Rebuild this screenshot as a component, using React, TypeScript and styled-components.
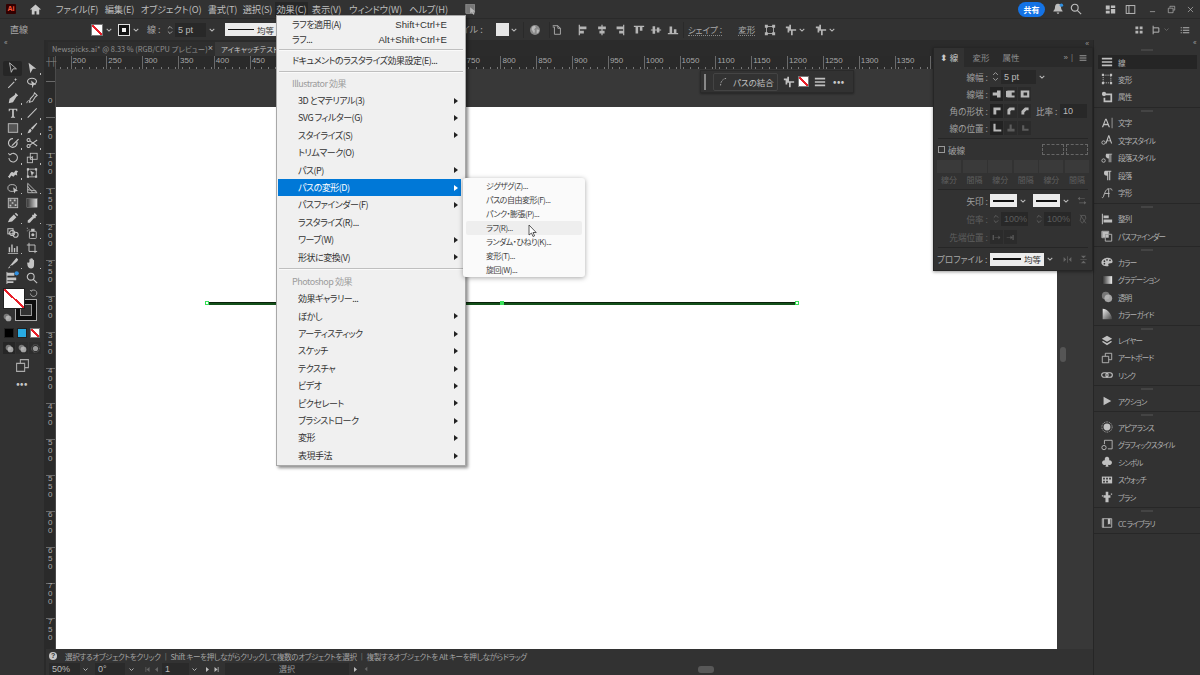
import React from "react";
import styled, { createGlobalStyle } from "styled-components";

const FONT = `"Noto Sans CJK JP", "Noto Sans", "Liberation Sans", sans-serif`;

const Global = createGlobalStyle`
  html, body { margin: 0; padding: 0; width: 1200px; height: 675px; overflow: hidden; background: #323232; }
  * { box-sizing: border-box; }
  body { font-family: ${FONT}; font-feature-settings: "palt"; }
`;

const Frame = styled.div`
  position: relative; width: 1200px; height: 675px; overflow: hidden; display: flex; flex-direction: column;
  background: #323232; color: #b8b8b8; font-size: 9px;
`;
const MenuBar = styled.div`display: flex; align-items: center; height: 18px; flex: none; background: #323232; position: relative;`;
const AppLogo = styled.div`
  width: 10px; height: 10px; margin-left: 6px; background: #330000; color: #ff5a3c; font: 700 7px/10px "Liberation Sans", sans-serif; text-align: center; border-radius: 1px; flex: none;
`;
const HomeBox = styled.div`width: 24px; margin-left: 7px; display: flex; justify-content: center; color: #c8c8c8; flex: none;`;
const MenuItems = styled.div`display: flex; margin-left: 5px; gap: 0;`;
const MenuLabel = styled.div<{ $w: number; $open?: boolean }>`
  width: ${(p) => p.$w}px; height: 15px; line-height: 15px; text-align: center; font-size: 9.3px; letter-spacing: -0.15px; white-space: nowrap; color: #bdbdbd;
  background: ${(p) => (p.$open ? "#272727" : "transparent")};
`;
const RightCluster = styled.div`margin-left: auto; display: flex; align-items: center; height: 18px; color: #bdbdbd;`;
const ShareBtn = styled.div`
  width: 27px; height: 15px; border-radius: 8px; background: #1473e6; color: #fff; font-size: 8px; line-height: 15px; text-align: center; font-weight: 700; margin-right: 3px;
`;
const IconSlot = styled.div<{ $w: number }>`width: ${(p) => p.$w}px; display: flex; justify-content: center; align-items: center; flex: none;`;

const ControlBar = styled.div`
  display: flex; align-items: center; height: 22px; flex: none; background: #323232; border-top: 1px solid #2a2a2a; padding: 0 10px; color: #b5b5b5; font-size: 9px; position: relative;
`;
const Gap = styled.div<{ $w: number }>`width: ${(p) => p.$w}px; flex: none;`;
const Filler = styled.div`flex: 1;`;
const CtrlText = styled.span<{ $w?: number; $line?: boolean }>`
  flex: none; white-space: nowrap; ${(p) => (p.$w ? `width:${p.$w}px;` : "")} color: #a8a8a8; ${(p) => (p.$line ? "border-bottom: 1px dotted #888; line-height: 12px; font-size: 8.5px;" : "")}
`;
const NoneSwatch = styled.div<{ $w?: number; $h?: number }>`
  flex: none; width: ${(p) => p.$w ?? 12}px; height: ${(p) => p.$h ?? 12}px; border: 1px solid #777;
  background: linear-gradient(to top right, #fff calc(50% - 1px), #e8202a calc(50% - 1px), #e8202a calc(50% + 1px), #fff calc(50% + 1px));
`;
const StrokeSwatch = styled.div`
  flex: none; width: 12px; height: 12px; background: #111; border: 1px solid #ddd; display: flex; align-items: center; justify-content: center;
  &::after { content: ""; width: 4px; height: 4px; background: #eee; }
`;
const FlatSwatch = styled.div`flex: none; width: 13px; height: 13px; background: #e6e6e6;`;
const Chevron = styled.div<{ $w?: number; $dim?: boolean }>`
  flex: none; width: ${(p) => p.$w ?? 11}px; height: 12px; display: flex; align-items: center; justify-content: center; color: ${(p) => (p.$dim ? "#666" : "#bbb")};
`;
const FieldBox = styled.div<{ $w: number; $dim?: boolean }>`
  flex: none; width: ${(p) => p.$w}px; height: 14px; background: #282828; font-size: 9px; line-height: 14px; padding-left: 3px; color: ${(p) => (p.$dim ? "#5c5c5c" : "#bbb")}; font-family: "Liberation Sans", sans-serif;
`;
const LinePick = styled.div<{ $w: number; $dim?: boolean }>`
  flex: none; width: ${(p) => p.$w}px; height: 13px; background: #ececec; display: flex; align-items: center; padding: 0 3px; gap: 3px; color: #333; font-size: 8.5px;
`;
const LineMark = styled.div<{ $h?: number }>`flex: 1; height: ${(p) => p.$h ?? 1.5}px; background: #111;`;
const VSep = styled.div`flex: none; width: 1px; height: 16px; background: #2a2a2a;`;

const Body = styled.div`flex: 1; display: flex; min-height: 0;`;
const ToolPanel = styled.div`
  width: 46px; flex: none; background: #323232; border-right: 2px solid #2a2a2a; display: flex; flex-direction: column; align-items: center; position: relative; padding-top: 21px;
`;
const PanelHead = styled.div`position: absolute; top: 0; left: 0; right: 0; height: 7px; color: #999; font-size: 7px; line-height: 6px; padding-left: 4px; letter-spacing: -1px; font-family: "Liberation Sans", sans-serif;`;
const ToolGrid = styled.div`display: grid; grid-template-columns: 19px 19px; grid-auto-rows: 14.95px; width: 38px;`;
const ToolBtn = styled.div<{ $on?: boolean; $more?: boolean }>`
  position: relative; display: flex; align-items: center; justify-content: center; color: #c4c4c4;
  background: ${(p) => (p.$on ? "#262626" : "transparent")}; border-radius: 2px;
  ${(p) => (p.$more ? `&::after { content: ""; position: absolute; right: 0; bottom: 1px; width: 1.5px; height: 1.5px; background: #bbb; }` : "")}
`;
const ColorWell = styled.div`position: relative; width: 38px; height: 37px; margin-top: 3px; flex: none;`;
const FillFront = styled(NoneSwatch)`position: absolute; left: 0; top: 0; z-index: 1; border: 1px solid #222;`;
const StrokeBack = styled.div`position: absolute; left: 12px; top: 11px; width: 22px; height: 22px; background: #0d0d0d; border: 1px solid #aaa; display: flex; align-items: center; justify-content: center; &::after { content: ""; width: 10px; height: 10px; border: 1px solid #999; background: #323232; }`;
const SwapMark = styled.div`position: absolute; right: 3px; top: 0; color: #bbb;`;
const DefaultMark = styled.div`position: absolute; left: 0; bottom: 0; z-index: 2; color: #ddd;`;
const ModeRow = styled.div`display: flex; gap: 3px; margin-top: 3px;`;
const ModeSwatch = styled.div<{ $c: string }>`width: 10px; height: 10px; background: ${(p) => p.$c}; border: 1px solid #222;`;
const DrawRow = styled.div`display: flex; gap: 1px; margin-top: 4px; color: #bbb;`;
const DrawBtn = styled.div<{ $on?: boolean }>`width: 12px; height: 12px; display: flex; align-items: center; justify-content: center; background: ${(p) => (p.$on ? "#262626" : "#2d2d2d")}; color: ${(p) => (p.$on ? "#ddd" : "#999")};`;
const ScreenBtn = styled.div`margin-top: 4px; color: #aaa; display: flex;`;
const MoreDots = styled.div`margin-top: 6px; color: #c8c8c8; font-size: 9px; letter-spacing: 0.5px; line-height: 10px; font-weight: 700;`;
const BarDots = styled.div`color: #c8c8c8; font-size: 9px; letter-spacing: 0.5px; line-height: 10px; font-weight: 700;`;

const Center = styled.div`flex: 1; min-width: 0; display: flex; flex-direction: column; position: relative;`;
const TabRow = styled.div`height: 16px; flex: none; background: #2b2b2b; display: flex; align-items: flex-end; font-size: 7.4px; padding-left: 2px;`;
const Tab = styled.div<{ $w: number; $on?: boolean }>`
  width: ${(p) => p.$w}px; height: 14px; line-height: 13px; padding-left: ${(p) => (p.$on ? 6 : 4)}px; white-space: nowrap; flex: none;
  background: ${(p) => (p.$on ? "#3a3a3a" : "#2e2e2e")}; color: ${(p) => (p.$on ? "#c8c8c8" : "#8f8f8f")}; display: flex; justify-content: space-between;
`;
const TabClose = styled.span`padding-right: 6px; color: #aaa; font-family: "Liberation Sans", sans-serif; font-size: 9px;`;
const TabEnd = styled.div`margin-left: auto; align-self: flex-start; padding-right: 5px; color: #999; font: 7px/8px "Liberation Sans", sans-serif; letter-spacing: -1px;`;
const HRuler = styled.div`
  height: 13px; flex: none; display: flex; overflow: hidden; background-color: #2a2a2a; color: #a6a6a6; font: 8px/10px "Liberation Sans", sans-serif;
  background-image: repeating-linear-gradient(to right, #777 0, #777 1px, transparent 1px, transparent 7.16px);
  background-size: 100% 2px; background-repeat: no-repeat; background-position: bottom left;
`;
const RulerCorner = styled.div`width: 10px; flex: none; background: #2a2a2a; border-right: 1px solid #555; color: #888; font-size: 8px; line-height: 11px; letter-spacing: -1px;`;
const RulerLead = styled.div`width: 14.5px; flex: none;`;
const HTick = styled.div`width: 35.83px; flex: none; border-left: 1px solid #6a6a6a; padding-left: 1px; height: 13px;`;
const CanvasRow = styled.div`flex: 1; display: flex; min-height: 0;`;
const VRuler = styled.div`width: 10px; flex: none; background: #2a2a2a; overflow: hidden; display: flex; flex-direction: column; padding-top: 12px; border-right: 1px solid #4a4a4a;`;
const VTick = styled.div`
  height: 35.83px; flex: none; border-top: 1px solid #6a6a6a; display: flex; flex-direction: column; justify-content: flex-end; padding-bottom: 12px; padding-left: 2px;
  font: 8px/8px "Liberation Sans", sans-serif; color: #a6a6a6;
`;
const Pasteboard = styled.div`flex: 1; position: relative; background: #383838; display: flex; flex-direction: column; padding: 38px 36px 0 0; min-width: 0;`;
const Artboard = styled.div`flex: 1; background: #fff; position: relative;`;
const PathLine = styled.div`position: absolute; left: 151px; top: 195px; width: 590px; height: 3px; background: #14501a; border-top: 1px solid #0a230a;`;
const Anchor = styled.div<{ $pos: "l" | "m" | "r" }>`
  position: absolute; top: -2px; width: 4px; height: 4px; border: 1px solid #39e05a; background: ${(p) => (p.$pos === "m" ? "#39e05a" : "#fff")};
  left: ${(p) => (p.$pos === "l" ? "-2px" : p.$pos === "m" ? "293px" : "588px")};
`;
const VScrollThumb = styled.div`position: absolute; right: 27px; top: 278px; width: 6px; height: 15px; background: #555; border-radius: 3px;`;

const Status = styled.div`flex: none; height: 26px; background: #323232; display: flex; flex-direction: column;`;
const HintRow = styled.div`height: 14px; display: flex; align-items: center; padding-left: 3px; gap: 4px; font-size: 7.6px; letter-spacing: -0.4px; color: #a3a3a3; white-space: nowrap; overflow: hidden; background: #323232;`;
const HelpDot = styled.div`width: 8px; height: 8px; border-radius: 50%; background: #c8c8c8; color: #333; font: 700 7px/8px "Liberation Sans", sans-serif; text-align: center; flex: none; margin-right: 4px;`;
const NavRow = styled.div`height: 12px; display: flex; align-items: center; padding-left: 3px; position: relative; color: #bbb; background: #323232;`;
const NavField = styled(FieldBox)`height: 12px; line-height: 13px; background: #2a2a2a;`;
const NavTool = styled.div`width: 124px; flex: none; text-align: center; font-size: 8px; color: #999; background: #2a2a2a; line-height: 12px;`;
const NavThumb = styled.div`position: absolute; left: 652px; top: 3px; width: 16px; height: 7px; background: #585858; border-radius: 3px;`;

const Dock = styled.div`width: 107px; flex: none; background: #323232; border-left: 1px solid #262626; padding-top: 7px; display: flex; flex-direction: column; position: relative;`;
const DockHead = styled.div`position: absolute; top: 0; left: 99px; color: #999; font: 7px/6px "Liberation Sans", sans-serif; letter-spacing: -1px;`;
const DockGroup = styled.div`border-bottom: 1px solid #272727; padding: 2px 0 1.3px; display: flex; flex-direction: column; align-items: stretch;`;
const Grip = styled.div`align-self: center; width: 12px; height: 2px; background: #444; margin-bottom: 2.3px;`;
const DockRow = styled.div<{ $on?: boolean }>`
  height: 17.45px; display: flex; align-items: center; margin: 0 3px 0 4px; padding-left: 2px; gap: 4px; font-size: 7.5px; letter-spacing: -0.8px; color: #b0b0b0; white-space: nowrap;
  ${(p) => (p.$on ? "background: linear-gradient(#252525, #252525) no-repeat center / 100% 14px;" : "")}
`;
const DockIcon = styled.div`width: 14px; display: flex; justify-content: center; color: #c0c0c0; flex: none;`;

const FloatBar = styled.div`
  position: absolute; left: 654px; top: 30px; width: 154px; height: 23px; background: #323232; border: 1px solid #2a2a2a; box-shadow: 0 1px 2px rgba(0,0,0,.35); display: flex; align-items: center; padding-left: 3px; color: #c0c0c0;
`;
const GripBar = styled.div`width: 2px; height: 16px; background: #888; margin-right: 7px; flex: none;`;
const JoinBtn = styled.div`width: 65px; height: 18px; border: 1px solid #444; border-radius: 2px; display: flex; align-items: center; padding-left: 5px; gap: 3px; font-size: 8.5px; flex: none; white-space: nowrap;`;

const MenuPanel = styled.div`
  position: absolute; left: 276px; top: 15px; width: 190px; height: 451px; z-index: 20; background: #f0f0f0; border: 1px solid #a8a8a8; box-shadow: 2px 2px 3px rgba(0,0,0,.45);
  padding: 1px; color: #333; font-size: 9px; letter-spacing: -0.5px;
`;
const Row = styled.div<{ $sel?: boolean; $dim?: boolean; $plain?: boolean; $h?: number }>`
  height: ${(p) => p.$h ?? 17.4}px; line-height: ${(p) => p.$h ?? 17.4}px; display: flex; justify-content: space-between; align-items: center; position: relative; white-space: nowrap;
  padding: 0 3px 0 ${(p) => (p.$plain || p.$dim ? 14 : 20)}px; margin-right: 3px;
  background: ${(p) => (p.$sel ? "#0078d7" : "transparent")}; color: ${(p) => (p.$sel ? "#fff" : p.$dim ? "#9c9c9c" : "#333")};
`;
const Shortcut = styled.span`padding-right: 11px; font-family: "Liberation Sans", sans-serif; font-size: 9.6px; letter-spacing: 0;`;
const Arrow = styled.div<{ $light?: boolean }>`width: 0; height: 0; margin-right: 0; border-left: 4px solid ${(p) => (p.$light ? "#fff" : "#222")}; border-top: 3px solid transparent; border-bottom: 3px solid transparent;`;
const MenuSep = styled.div<{ $m?: number }>`height: 2px; background: #bfbfbf; margin: ${(p) => p.$m ?? 2}px 1px; border-bottom: 1px solid #fafafa;`;

const SubMenu = styled.div`
  position: absolute; left: 463px; top: 178px; width: 122px; height: 99px; z-index: 21; background: #fafafa; border-radius: 3px; box-shadow: 0 1px 5px rgba(0,0,0,.35); padding: 1px 3px; font-size: 8px; letter-spacing: -0.5px; color: #444;
`;
const SubRow = styled.div<{ $on?: boolean }>`height: 14px; line-height: 14px; padding-left: 20px; border-radius: 2px; white-space: nowrap; background: ${(p) => (p.$on ? "#eeeeee" : "transparent")};`;
const Cursor = styled.svg`position: absolute; left: 528px; top: 224px; z-index: 22;`;

const StrokePanel = styled.div`
  position: absolute; left: 933px; top: 47px; width: 160px; height: 224px; z-index: 10; background: #323232; border: 1px solid #262626; box-shadow: 0 1px 3px rgba(0,0,0,.4); font-size: 8.6px; color: #a0a0a0; display: flex; flex-direction: column;
`;
const PanelTabs = styled.div`height: 19px; flex: none; background: #2a2a2a; display: flex; align-items: center;`;
const PTab = styled.div<{ $on?: boolean; $w: number }>`
  width: ${(p) => p.$w}px; height: 19px; line-height: 18px; flex: none; text-align: center; white-space: nowrap; color: ${(p) => (p.$on ? "#ccc" : "#8c8c8c")}; background: ${(p) => (p.$on ? "#323232" : "transparent")}; font-size: 8.5px;
`;
const PTabTools = styled.div`margin-left: auto; padding-right: 5px; display: flex; align-items: center; gap: 3px; color: #999; font: 8px/10px "Liberation Sans", sans-serif;`;
const PRow = styled.div<{ $h?: number }>`height: ${(p) => p.$h ?? 17}px; display: flex; align-items: center; flex: none; padding-left: 3px;`;
const PLabel = styled.div<{ $dim?: boolean }>`width: 53px; text-align: right; padding-right: 2px; flex: none; white-space: nowrap; color: ${(p) => (p.$dim ? "#5f5f5f" : "#a0a0a0")};`;
const CapBtn = styled.div<{ $on?: boolean; $dim?: boolean }>`
  width: 13px; height: 14px; display: flex; align-items: center; justify-content: center; flex: none; background: ${(p) => (p.$on ? "#222" : "#2b2b2b")}; color: ${(p) => (p.$dim ? "#5c5c5c" : "#b8b8b8")}; margin-right: 1px;
`;
const PSep = styled.div`height: 1px; background: #262626; margin: 2px 4px; flex: none;`;
const CheckBox = styled.div`width: 7px; height: 7px; border: 1px solid #999; margin: 0 3px 0 1px; flex: none;`;
const DashGrid = styled.div`display: grid; grid-template-columns: repeat(6, 24px); column-gap: 1.6px; padding: 2px 0 1px 3px; flex: none;`;
const DashBox = styled.div`height: 13px; background: #3a3a3a;`;
const DashLabel = styled.div`text-align: center; color: #5f5f5f; font-size: 8px; line-height: 13px;`;
const Hollow = styled.div`width: 22px; height: 11px; border: 1px dashed #666; margin-left: 2px; flex: none;`;

const p = (...d: string[]) => d.map((x, i) => <path key={i} d={x} />);
const ICONS: Record<string, React.ReactNode> = {
  sel: <path d="M3 1l8 7H7l-2 4z" fill="none" stroke="currentColor" />,
  dsel: p("M3 1l9 7H8l-3 5z"),
  wand: p("M1 12.2L8 5.2l.9.9-7 7zM10 1l.6 1.6L12.2 3l-1.6.6L10 5l-.6-1.4L8 3l1.4-.4z"),
  lasso: (
    <g>
      <ellipse cx="7" cy="5" rx="5.2" ry="3.6" fill="none" stroke="currentColor" strokeWidth="1.3" />
      <path d="M6 4l6 5H9l-1.5 4z" />
    </g>
  ),
  pen: p("M10 1l3 3-2 1.5L7 12 2 13l1-5 6-4.5z"),
  cpen: (
    <g>
      <path d="M10 1l3 3-2 1.5L7.5 11 4 12l1-4 4-4.5z" fill="none" stroke="currentColor" strokeWidth="1.2" />
      <path d="M1 13c0-2 1-3 3-3" fill="none" stroke="currentColor" />
    </g>
  ),
  type: p("M2 2h10v3h-1l-.5-1.7H8V11l1.4.6V12.5H4.6v-.9L6 11V3.3H3.5L3 5H2z"),
  line: <path d="M2 12.5L12.5 1.5" stroke="currentColor" strokeWidth="1.2" fill="none" />,
  rect: <rect x="1.5" y="2" width="11" height="10" fill="#555" stroke="currentColor" />,
  brush: p("M12.5 1l.7.7L7.5 9 5.6 7.2zM5 8l1.5 1.5c-.3 2.2-2.5 3.6-5 3.5 1.6-1 1-3.8 3.5-5z"),
  blob: (
    <g>
      <path d="M11.5 5.5A5 5 0 1 1 7 2" fill="none" stroke="currentColor" strokeWidth="1.4" />
      <path d="M13 2l1 1-7 7-2 1 1-2z" />
    </g>
  ),
  scissors: (
    <g fill="none" stroke="currentColor" strokeWidth="1.2">
      <circle cx="3" cy="3.5" r="1.8" />
      <circle cx="3" cy="10.5" r="1.8" />
      <path d="M4.5 4.5l8.5 6M4.5 9.5l8.5-6" />
    </g>
  ),
  rotate: <path d="M3.5 3.2A5 5 0 1 1 2.2 7M1.5 1.5L3.4 3.4 5.4 2" fill="none" stroke="currentColor" strokeWidth="1.2" />,
  scale: (
    <g fill="none" stroke="currentColor">
      <rect x="5" y="1.5" width="8" height="7" />
      <rect x="1.5" y="6" width="6" height="6.5" />
      <path d="M5 8l3-3" />
    </g>
  ),
  warp: p("M1 11c2-1 2-4 4-5 1.4-.7 2 1 3 .5S9 4 10.5 4s2.5 1 2.5 1l-1.5 2 .5 3-2.5-1-2 2.5L5 10l-2 3z"),
  free: (
    <g>
      <rect x="2" y="2.5" width="10" height="9" fill="none" stroke="currentColor" />
      <path d="M1 1.500h2.500v2.500H1zM10.500 1.500H13V4h-2.500zM1 10h2.500v2.500H1zM10.500 10H13v2.500h-2.500zM5 4l5 3-2 1-1 3z" />
    </g>
  ),
  builder: (
    <g>
      <ellipse cx="6" cy="7" rx="5" ry="4" fill="none" stroke="currentColor" />
      <path d="M7 6l6 4.500-3 .3-1.500 2.700z" />
    </g>
  ),
  persp: (
    <g fill="none" stroke="currentColor">
      <path d="M2 1.500V12.500H13L2 1.500zM2 5l6 7.500M2 9l10 1.500" />
    </g>
  ),
  mesh: (
    <g>
      <rect x="1.500" y="1.500" width="11" height="11" fill="#555" stroke="currentColor" />
      <path d="M3 3h2v2H3zM8 3h2v2H8zM5.500 6h2v2h-2zM3 9h2v2H3zM9 8.500h2v2H9z" />
    </g>
  ),
  gradient: (
    <g>
      <defs>
        <linearGradient id="toolgrad">
          <stop offset="0" stopColor="#333" />
          <stop offset="1" stopColor="#ddd" />
        </linearGradient>
      </defs>
      <rect x="1" y="2" width="12" height="10" fill="url(#toolgrad)" stroke="#999" strokeWidth=".5" />
    </g>
  ),
  pencil: p("M1 12l2-4 5-5 3 3-5 5zM9 2l1.500-1 2.500 2.500-1 1.500z"),
  dropper: p("M10 1l3 3-2 1.500.5 1-1 1-1-.5-5 5.500H2v-2.500l5.500-5-.5-1 1-1 1 .5z"),
  blend: (
    <g fill="none" stroke="currentColor" strokeWidth="1.2">
      <rect x="1" y="2" width="6" height="6" />
      <circle cx="6" cy="7" r="3" />
      <circle cx="10" cy="9" r="3" />
    </g>
  ),
  spray: (
    <g>
      <rect x="4" y="5" width="8" height="8.500" rx="1" fill="none" stroke="currentColor" />
      <path d="M6 2h4v3H6zM1 1h1v1H1zM3 3h1v1H3zM1 4h1v1H1z" />
      <circle cx="8" cy="9" r="1.800" />
    </g>
  ),
  graph: p("M1 13h12v1H1zM2 6h1.600v6H2zM5 3h1.600v9H5zM8 7h1.600v5H8zM11 5h1.600v7H11z"),
  board: <path d="M3.500 1v10H13M1 3.500h9.500V13" fill="none" stroke="currentColor" strokeWidth="1.100" />,
  slice: p("M2 12L11 1l2 2-1 2-6 5-1-.5zM1 13l2-2 1 1-2 1z"),
  hand: p("M4 6V3c0-1 1.300-1 1.300 0v2.500V2c0-1 1.400-1 1.400 0v3.500V2.500c0-1 1.400-1 1.400 0v3.500V4c0-1 1.300-1 1.300 0v5c0 3-1.500 4.500-3.500 4.500-2.500 0-3-1.500-4-3L1.500 7.500c-.5-1 .8-1.500 1.300-.7z"),
  tile: (
    <g>
      <path d="M1 2h8v3H1zM1 7h10v3H1zM1 11h7v2H1z" />
      <path d="M1 1v13" stroke="currentColor" />
      <circle cx="11.500" cy="2.500" r="2.300" fill="#2f8fe0" />
    </g>
  ),
  zoom: (
    <g fill="none" stroke="currentColor" strokeWidth="1.300">
      <circle cx="5.500" cy="5.500" r="4" />
      <path d="M8.500 8.500l4.500 4.500" />
    </g>
  ),
  home: p("M7 1.500L1 7h2v5.500h3V9h2v3.500h3V7h2z"),
  bell: (
    <g>
      <path d="M7 1c2.500 0 3.500 2 3.500 4 0 3 2 4 2 5H1.500c0-1 2-2 2-5 0-2 1-4 3.500-4zM5.500 11h3c0 2-3 2-3 0z" />
      <circle cx="11" cy="2.500" r="2" fill="#2f8fe0" />
    </g>
  ),
  chev: <path d="M3 5l4 4 4-4" fill="none" stroke="currentColor" strokeWidth="1.800" />,
  spin: <path d="M4 5l3-3 3 3M4 9l3 3 3-3" fill="none" stroke="currentColor" strokeWidth="1.200" />,
  layout: p("M1 2h5v5H1zM7.500 2h5.500v3H7.500zM1 8.500h5V12H1zM7.500 6.500H13V12H7.500z"),
  side: (
    <g fill="none" stroke="currentColor" strokeWidth="1.200">
      <rect x="1.500" y="2" width="11" height="10" />
      <path d="M5 2v10" />
    </g>
  ),
  min: p("M3 10h8v1H3z"),
  restore: <path d="M4.500 4V2H12v6h-2M2 5h7.500v7H2z" fill="none" stroke="currentColor" />,
  close: <path d="M3 3l8 8M11 3l-8 8" fill="none" stroke="currentColor" />,
  arrange: (
    <g>
      <rect x="1" y="2" width="10" height="10" fill="#777" stroke="#ccc" strokeWidth=".5" />
      <path d="M6 5l6 5-2.500.2 1.500 3-1.500.6-1.300-3L6 12z" />
    </g>
  ),
  globe: (
    <g>
      <circle cx="7" cy="7" r="5.800" fill="#8a8a8a" />
      <path d="M4 3l3-1 1 2-2 2 1 2-1 3-2-3-1-2zM9 6l3 1-1 3-2 1z" fill="#bbb" />
    </g>
  ),
  doc: <path d="M2 2h6l3 3v7H4V3.500H2M8 2v3h3" fill="none" stroke="currentColor" />,
  al1: p("M2 1h1.400v12H2zM3.400 3H11v3H3.400zM3.400 8H8v3H3.400z"),
  al2: p("M6.300 1h1.400v12H6.300zM2.500 3h9v3h-9zM4 8h6v3H4z"),
  al3: p("M10.600 1H12v12h-1.400zM3 3h7.600v3H3zM6 8h4.600v3H6z"),
  al4: p("M1 2h12v1.400H1zM3 3.400h3V11H3zM8 3.400h3V8H8z"),
  al5: p("M1 6.300h12v1.400H1zM3 2.500h3v9H3zM8 4h3v6H8z"),
  al6: p("M1 10.600h12V12H1zM3 3h3v7.600H3zM8 6h3v4.600H8z"),
  xform: (
    <g>
      <rect x="3" y="3" width="8" height="8" fill="none" stroke="currentColor" />
      <path d="M1 1h3.500v3.500H1zM9.500 1H13v3.500H9.500zM1 9.500h3.500V13H1zM9.500 9.500H13V13H9.500z" />
    </g>
  ),
  shape1: p("M1 3h4V1h2v5h6v2H9v5H7V8H5v2H3V5H1z"),
  dots4: p("M2 2h4v4H2zM8 2h4v4H8zM2 8h4v4H2zM8 8h4v4H8z"),
  snap: <path d="M3 1v12M3 4h8v6H3" fill="none" stroke="currentColor" strokeWidth="1.400" />,
  list: p("M1 3h1.500v1.500H1zM4 3h9v1.500H4zM1 6.500h1.500V8H1zM4 6.500h9V8H4zM1 10h1.500v1.500H1zM4 10h9v1.500H4z"),
  lines: p("M1 2h12v2H1zM1 6h12v2H1zM1 10h12v2H1z"),
  xformd: (
    <g>
      <rect x="2.500" y="2.500" width="9" height="9" fill="none" stroke="currentColor" strokeDasharray="1.500 1" />
      <path d="M1 1h2.500v2.500H1zM10.500 1H13v2.500h-2.500zM1 10.500h2.500V13H1zM10.500 10.500H13V13h-2.500z" />
    </g>
  ),
  attr: (
    <g>
      <path d="M5 3h8v10H3V8h2v3h6V5H5z" />
      <circle cx="3.500" cy="3.500" r="2.500" />
    </g>
  ),
  charA: (
    <g>
      <path d="M1 12L5 2h1.500l4 10H9L8 9.500H3.500L2.500 12zM4 8h3.500L5.700 3.500z" />
      <path d="M12.500 1v12h.8V1z" />
    </g>
  ),
  charS: (
    <g>
      <path d="M5 11L8.500 1.500h1.200L13 11h-1.300l-.9-2.500H7.300L6.400 11zM7.800 7.500h2.600L9.100 3.500z" />
      <circle cx="3" cy="10" r="2" fill="none" stroke="currentColor" />
    </g>
  ),
  paraS: (
    <g>
      <path d="M6 2h7v1h-1v9h-1V3h-1v9H9V7.500C6.500 7.500 5.500 6 5.500 4.700S6 2 6 2z" />
      <circle cx="3" cy="10" r="2" fill="none" stroke="currentColor" />
    </g>
  ),
  para: p("M5 2h7v1.200h-1.200V13H9.500V3.200H8.500V13H7.200V8C4.500 8 3.500 6.500 3.500 5S4 2 5 2z"),
  glyph: <path d="M9 2c-3 0-5 5-6 9-.3 1.500-1.500 1.500-2 1M9 2v10M4.500 7.500H10M10 2c1.500 0 3 .5 3 2" fill="none" stroke="currentColor" strokeWidth="1.100" />,
  align: p("M1 1h1.200v12H1zM3 3h6v3H3zM3 7.500h10V11H3z"),
  finder: (
    <g>
      <path d="M1 1.500h8v3.500h3.500v8H5V9H1z" fill="none" stroke="currentColor" />
      <path d="M5 5h4v4H5z" />
      <path d="M1.500 2h7v3H5v3.500H1.500z" />
    </g>
  ),
  palette: (
    <g>
      <path d="M8 2C4 2 .5 4.500.5 7.500s3 4.500 7 4.500c1.500 0 1.500-1 1-1.800S9 8.500 10.500 8.500s3 0 3-2C13.500 3.500 11 2 8 2z" />
      <circle cx="4" cy="6" r="1" fill="#333" />
      <circle cx="7" cy="4.500" r="1" fill="#333" />
      <circle cx="10.500" cy="5" r="1" fill="#333" />
      <circle cx="4" cy="9" r="1" fill="#333" />
    </g>
  ),
  grad: (
    <g>
      <defs>
        <linearGradient id="dockgrad">
          <stop offset="0" stopColor="#222" />
          <stop offset="1" stopColor="#eee" />
        </linearGradient>
      </defs>
      <rect x="1" y="2.500" width="12" height="9" fill="url(#dockgrad)" />
    </g>
  ),
  alpha: (
    <g>
      <circle cx="5.500" cy="5.500" r="4.500" fill="#777" />
      <circle cx="8.500" cy="8.500" r="4.500" fill="#c0c0c0" opacity=".8" />
    </g>
  ),
  guide: (
    <g>
      <defs>
        <linearGradient id="guidegrad" x1="0" y1="0" x2="1" y2="1">
          <stop offset="0" stopColor="#eee" />
          <stop offset="1" stopColor="#444" />
        </linearGradient>
      </defs>
      <path d="M2 1c5 0 10 5 11 12H2z" fill="url(#guidegrad)" />
    </g>
  ),
  layers: p("M7 1l6 3.500L7 8 1 4.500zM2.500 7L7 9.600 11.500 7 13 8l-6 4-6-4z"),
  boards: <path d="M5 5V1.500h7.500V9H9M1.500 5H9v7.500H1.500z" fill="none" stroke="currentColor" />,
  link: (
    <g fill="none" stroke="currentColor" strokeWidth="1.300">
      <rect x=".8" y="4.300" width="7.500" height="5.400" rx="2.700" />
      <rect x="5.700" y="4.300" width="7.500" height="5.400" rx="2.700" />
    </g>
  ),
  play: p("M3 2l9 5-9 5z"),
  appear: (
    <g>
      <circle cx="7" cy="7" r="4" />
      <circle cx="7" cy="7" r="6" fill="none" stroke="currentColor" strokeDasharray="1 1" />
    </g>
  ),
  gstyle: (
    <g fill="none" stroke="currentColor">
      <path d="M4 6V1.500h9v10H8" />
      <rect x="1" y="7.500" width="5" height="5" rx="2.500" />
    </g>
  ),
  club: p("M7 1a2.700 2.700 0 0 1 2.300 4.100A2.800 2.800 0 1 1 8 9.800l.8 2.700H5.200l.8-2.700A2.800 2.800 0 1 1 4.700 5.100 2.700 2.700 0 0 1 7 1z"),
  swatch: (
    <g>
      <path d="M1 3h12v8H1z" />
      <path d="M2.500 4.500h2v2h-2zM6 4.500h2v2H6zM9.500 4.500h2v2h-2zM2.500 8h2v2h-2zM6 8h2v2H6z" fill="#333" />
    </g>
  ),
  ubrush: p("M5.500 1h3v4h2.500v3H8.800v5H5.200V8H3V5h2.500zM1 5h1.500v1.500H1zM11.500 3H13v1.500h-1.500z"),
  cc: (
    <g>
      <path d="M1.500 2h11v10h-11z" fill="none" stroke="currentColor" />
      <path d="M8 2h3v7L9.500 8 8 9z" />
      <path d="M3 2v10" stroke="currentColor" />
    </g>
  ),
  pathjoin: <path d="M2 12c0-5 3-9 8-9" fill="none" stroke="currentColor" strokeDasharray="2 1.500" />,
  cap1: p("M1 5h6V2h5v10H7V9H1z"),
  cap2: p("M3 2h9v3H8v4h4v3H3a5 5 0 0 1 0-10z"),
  cap3: p("M1 2h12v10H1zM5 5v4h5V5z"),
  join1: p("M2 2h10v4H6v6H2z"),
  join2: p("M5 2h7v4H7.500L6 7.500V12H2V5z"),
  join3: p("M7 2h5v4H9L6 9v3H2V7z"),
  pos1: p("M2 1h3v8h8v3H2z"),
  pos2: p("M5 2h3v6h4v4H2V8h3z"),
  pos3: p("M3 3h3v5h6v3H3z"),
  swapsm: p("M4 3h7v1H4V6L1 3.500 4 1zM10 10H3V9h7V7l3 2.500L10 12z"),
  unlink: (
    <g fill="none" stroke="currentColor">
      <path d="M3 1l8 12M5 2h5l1 4-5 7-3-4z" />
    </g>
  ),
  tipa: p("M1 3h2v8H1zM4 6.500h6V4l3 3-3 3V7.500H4z"),
  tipb: p("M10 3h2v8h-2zM1 6.500h6V4l3 3-3 3V7.500H1z"),
  flipH: p("M1 3l4 4-4 4zM13 3l-4 4 4 4zM6.500 2h1v10h-1z"),
  flipV: p("M3 1h8L7 5zM3 13h8L7 9zM2 6.500h10v1H2z"),
  first: p("M3 2h1.500v10H3zM11 2v10L5 7z"),
  prev: p("M10 2v10L4 7z"),
  next: p("M4 2v10l6-5z"),
  last: p("M3 2v10l6-5zM9.500 2H11v10H9.500z"),
};

const Ico = ({ n, s = 12, c }: { n: string; s?: number; c?: string }) => (
  <svg width={s} height={s} viewBox="0 0 14 14" fill="currentColor" color={c}>
    {ICONS[n]}
  </svg>
);

const MENU = [
  ["ファイル(F)", 50], ["編集(E)", 35], ["オブジェクト(O)", 68], ["書式(T)", 35], ["選択(S)", 35], ["効果(C)", 33], ["表示(V)", 37], ["ウィンドウ(W)", 61], ["ヘルプ(H)", 45],
] as const;

const TOOLS: [string, boolean?, boolean?][] = [
  ["sel", true], ["dsel", false, true], ["wand"], ["lasso"], ["pen", false, true], ["cpen"], ["type", false, true], ["line", false, true], ["rect", false, true], ["brush", false, true],
  ["blob", false, true], ["scissors", false, true], ["rotate", false, true], ["scale", false, true], ["warp", false, true], ["free"], ["builder", false, true], ["persp", false, true], ["mesh"], ["gradient"],
  ["pencil", false, true], ["dropper", false, true], ["blend"], ["spray", false, true], ["graph", false, true], ["board"], ["slice", false, true], ["hand", false, true], ["tile"], ["zoom"],
];

const HR = ["200", "250", "300", "350", "400", "450", "", "", "", "", "", "750", "800", "850", "900", "950", "1000", "1050", "1100", "1150", "1200", "1250", "1300", "1350", "1400", "1450", "1500", "1550", "1600"];
const VR = ["0", "50", "100", "150", "200", "250", "300", "350", "400", "450", "500", "550", "600", "650", "700", "750"];

const DOCK: [string, string, boolean?][][] = [
  [["lines", "線", true], ["xformd", "変形"], ["attr", "属性"]],
  [["charA", "文字"], ["charS", "文字スタイル"], ["paraS", "段落スタイル"], ["para", "段落"], ["glyph", "字形"]],
  [["align", "整列"], ["finder", "パスファインダー"]],
  [["palette", "カラー"], ["grad", "グラデーション"], ["alpha", "透明"], ["guide", "カラーガイド"]],
  [["layers", "レイヤー"], ["boards", "アートボード"], ["link", "リンク"]],
  [["play", "アクション"]],
  [["appear", "アピアランス"], ["gstyle", "グラフィックスタイル"], ["club", "シンボル"], ["swatch", "スウォッチ"], ["ubrush", "ブラシ"]],
  [["cc", "CC ライブラリ"]],
];

const EFFECTS1: [string, boolean?][] = [
  ["3D とマテリアル(3)", true], ["SVG フィルター(G)", true], ["スタイライズ(S)", true], ["トリムマーク(O)"], ["パス(P)", true], ["パスの変形(D)", true], ["パスファインダー(F)", true], ["ラスタライズ(R)..."], ["ワープ(W)", true], ["形状に変換(V)", true],
];
const EFFECTS2: [string, boolean?][] = [
  ["効果ギャラリー..."], ["ぼかし", true], ["アーティスティック", true], ["スケッチ", true], ["テクスチャ", true], ["ビデオ", true], ["ピクセレート", true], ["ブラシストローク", true], ["変形", true], ["表現手法", true],
];
const SUB = ["ジグザグ(Z)...", "パスの自由変形(F)...", "パンク・膨張(P)...", "ラフ(R)...", "ランダム・ひねり(K)...", "変形(T)...", "旋回(W)..."];

export default function App() {
  return (
    <Frame>
      <Global />
      <MenuBar>
        <AppLogo>Ai</AppLogo>
        <HomeBox><Ico n="home" s={13} /></HomeBox>
        <MenuItems>
          {MENU.map(([t, w]) => (
            <MenuLabel key={t} $w={w} $open={t === "効果(C)"}>{t}</MenuLabel>
          ))}
        </MenuItems>
        <Gap $w={14} />
        <Ico n="arrange" s={12} />
        <RightCluster>
          <ShareBtn>共有</ShareBtn>
          <IconSlot $w={19}><Ico n="bell" s={12} /></IconSlot>
          <IconSlot $w={18}><Ico n="zoom" s={12} /></IconSlot>
          <Gap $w={15} />
          <IconSlot $w={20}><Ico n="layout" s={11} /></IconSlot>
          <IconSlot $w={20}><Ico n="side" s={11} /></IconSlot>
          <Gap $w={2} />
          <IconSlot $w={20}><Ico n="min" s={9} /></IconSlot>
          <IconSlot $w={19}><Ico n="restore" s={9} /></IconSlot>
          <IconSlot $w={19}><Ico n="close" s={9} /></IconSlot>
        </RightCluster>
      </MenuBar>

      <ControlBar>
        <CtrlText $w={81}>直線</CtrlText>
        <NoneSwatch />
        <Chevron><Ico n="chev" s={8} /></Chevron>
        <Gap $w={4} />
        <StrokeSwatch />
        <Chevron><Ico n="chev" s={8} /></Chevron>
        <Gap $w={6} />
        <CtrlText $w={18}>線 :</CtrlText>
        <Ico n="spin" s={10} />
        <FieldBox $w={31}>5 pt</FieldBox>
        <Chevron $w={11}><Ico n="chev" s={8} /></Chevron>
        <Gap $w={8} />
        <LinePick $w={52}><LineMark />均等</LinePick>
        <Gap $w={177} />
        <CtrlText>タイル :</CtrlText>
        <Gap $w={13} />
        <FlatSwatch />
        <Chevron><Ico n="chev" s={8} /></Chevron>
        <Gap $w={3} />
        <VSep />
        <Gap $w={5} />
        <Ico n="globe" s={12} />
        <Gap $w={8} />
        <VSep />
        <Gap $w={1} />
        <Ico n="doc" s={12} />
        <Gap $w={14} />
        <Ico n="al1" /><Gap $w={7} /><Ico n="al2" /><Gap $w={6} /><Ico n="al3" /><Gap $w={7} /><Ico n="al4" /><Gap $w={5} /><Ico n="al5" /><Gap $w={5} /><Ico n="al6" />
        <Gap $w={4} />
        <VSep />
        <Gap $w={4} />
        <CtrlText $line>シェイプ :</CtrlText>
        <Gap $w={16} />
        <CtrlText $line>変形</CtrlText>
        <Gap $w={9} />
        <Ico n="xform" s={12} />
        <Gap $w={9} />
        <Ico n="shape1" s={12} />
        <Chevron $w={10}><Ico n="chev" s={8} /></Chevron>
        <Gap $w={8} />
        <Ico n="shape1" s={12} />
        <Chevron $w={10}><Ico n="chev" s={8} /></Chevron>
        <Filler />
        <Ico n="dots4" s={10} />
        <Gap $w={7} />
        <Ico n="snap" s={10} />
        <Chevron $w={10} $dim><Ico n="chev" s={7} /></Chevron>
        <Gap $w={9} />
        <Ico n="list" s={10} />
      </ControlBar>

      <Body>
        <ToolPanel>
          <PanelHead>‹‹</PanelHead>
          <ToolGrid>
            {TOOLS.map(([n, on, more], i) => (
              <ToolBtn key={i} $on={on} $more={more}><Ico n={n} s={n === "tile" ? 13 : 12} /></ToolBtn>
            ))}
          </ToolGrid>
          <ColorWell>
            <FillFront $w={22} $h={21} />
            <StrokeBack />
            <SwapMark><Ico n="rotate" s={9} /></SwapMark>
            <DefaultMark><Ico n="alpha" s={9} /></DefaultMark>
          </ColorWell>
          <ModeRow>
            <ModeSwatch $c="#000" />
            <ModeSwatch $c="#29abe2" />
            <NoneSwatch $w={10} $h={10} />
          </ModeRow>
          <DrawRow>
            <DrawBtn $on><Ico n="alpha" s={9} /></DrawBtn>
            <DrawBtn><Ico n="alpha" s={9} /></DrawBtn>
            <DrawBtn><Ico n="appear" s={9} /></DrawBtn>
          </DrawRow>
          <ScreenBtn><Ico n="boards" s={15} /></ScreenBtn>
          <MoreDots>•••</MoreDots>
        </ToolPanel>

        <Center>
          <TabRow>
            <Tab $w={167}>Newspicks.ai* @ 8.33 % (RGB/CPU プレビュー)<TabClose>×</TabClose></Tab>
            <Tab $w={80} $on>アイキャッチテスト.ai</Tab>
            <TabEnd>‹‹</TabEnd>
          </TabRow>
          <HRuler>
            <RulerCorner>┼┼</RulerCorner>
            <RulerLead />
            {HR.map((t, i) => (
              <HTick key={i}>{t}</HTick>
            ))}
          </HRuler>
          <CanvasRow>
            <VRuler>
              {VR.map((t) => (
                <VTick key={t}>
                  {t.split("").map((d, i) => (
                    <span key={i}>{d}</span>
                  ))}
                </VTick>
              ))}
            </VRuler>
            <Pasteboard>
              <Artboard>
                <PathLine>
                  <Anchor $pos="l" />
                  <Anchor $pos="m" />
                  <Anchor $pos="r" />
                </PathLine>
              </Artboard>
              <VScrollThumb />
            </Pasteboard>
          </CanvasRow>
          <Status>
            <HintRow>
              <HelpDot>?</HelpDot>
              選択するオブジェクトをクリック ｜ Shift キーを押しながらクリックして複数のオブジェクトを選択 ｜ 複製するオブジェクトを Alt キーを押しながらドラッグ
            </HintRow>
            <NavRow>
              <NavField $w={31}>50%</NavField>
              <Chevron $w={11}><Ico n="chev" s={7} /></Chevron>
              <Gap $w={4} />
              <NavField $w={30}>0°</NavField>
              <Chevron $w={12}><Ico n="chev" s={7} /></Chevron>
              <Gap $w={6} />
              <Chevron $w={9} $dim><Ico n="first" s={7} /></Chevron>
              <Chevron $w={9} $dim><Ico n="prev" s={7} /></Chevron>
              <Gap $w={1} />
              <NavField $w={27}>1</NavField>
              <Chevron $w={10}><Ico n="chev" s={7} /></Chevron>
              <Gap $w={4} />
              <Chevron $w={9}><Ico n="next" s={7} /></Chevron>
              <Chevron $w={9}><Ico n="last" s={7} /></Chevron>
              <Gap $w={4} />
              <NavTool>選択</NavTool>
              <Chevron $w={12}><Ico n="next" s={7} /></Chevron>
              <Chevron $w={10} $dim><Ico n="prev" s={6} /></Chevron>
              <NavThumb />
            </NavRow>
          </Status>
          <FloatBar>
            <GripBar />
            <JoinBtn><Ico n="pathjoin" s={11} />パスの結合</JoinBtn>
            <Gap $w={3} />
            <IconSlot $w={16}><Ico n="shape1" s={12} /></IconSlot>
            <Gap $w={1} />
            <NoneSwatch $w={11} $h={11} />
            <Gap $w={4} />
            <IconSlot $w={14}><Ico n="lines" s={12} /></IconSlot>
            <Gap $w={6} />
            <BarDots>•••</BarDots>
          </FloatBar>
        </Center>

        <Dock>
          <DockHead>‹‹</DockHead>
          {DOCK.map((g, i) => (
            <DockGroup key={i}>
              <Grip />
              {g.map(([n, t, on]) => (
                <DockRow key={t} $on={on}>
                  <DockIcon><Ico n={n} s={12} /></DockIcon>
                  {t}
                </DockRow>
              ))}
            </DockGroup>
          ))}
        </Dock>
      </Body>

      <MenuPanel>
        <Row $plain $h={15}>ラフを適用(A)<Shortcut>Shift+Ctrl+E</Shortcut></Row>
        <Row $plain $h={15}>ラフ...<Shortcut>Alt+Shift+Ctrl+E</Shortcut></Row>
        <MenuSep />
        <Row $plain $h={16}>ドキュメントのラスタライズ効果設定(E)...</Row>
        <MenuSep />
        <Row $dim $h={17}>Illustrator 効果</Row>
        {EFFECTS1.map(([t, more]) => {
          const sel = t === "パスの変形(D)";
          return (
            <Row key={t} $sel={sel}>
              {t}
              {more && <Arrow $light={sel} />}
            </Row>
          );
        })}
        <MenuSep $m={2.5} />
        <Row $dim>Photoshop 効果</Row>
        {EFFECTS2.map(([t, more]) => (
          <Row key={t}>
            {t}
            {more && <Arrow />}
          </Row>
        ))}
      </MenuPanel>

      <SubMenu>
        {SUB.map((t) => (
          <SubRow key={t} $on={t === "ラフ(R)..."}>{t}</SubRow>
        ))}
      </SubMenu>
      <Cursor width="10" height="14" viewBox="0 0 10 14">
        <path d="M1 1v10l2.500-2 1.500 3.500 1.600-.7L5 8.500h3.200z" fill="#fff" stroke="#333" strokeWidth=".8" />
      </Cursor>

      <StrokePanel>
        <PanelTabs>
          <PTab $on $w={30}>⬍ 線</PTab>
          <PTab $w={34}>変形</PTab>
          <PTab $w={26}>属性</PTab>
          <PTabTools>»｜<Ico n="lines" s={8} /></PTabTools>
        </PanelTabs>
        <PRow $h={1} />
        <PRow>
          <PLabel>線幅 :</PLabel>
          <Ico n="spin" s={11} />
          <FieldBox $w={35}>5 pt</FieldBox>
          <Chevron $w={11}><Ico n="chev" s={8} /></Chevron>
        </PRow>
        <PRow>
          <PLabel>線端 :</PLabel>
          <CapBtn $on><Ico n="cap1" s={10} /></CapBtn>
          <CapBtn><Ico n="cap2" s={10} /></CapBtn>
          <CapBtn><Ico n="cap3" s={10} /></CapBtn>
        </PRow>
        <PRow>
          <PLabel>角の形状 :</PLabel>
          <CapBtn $on><Ico n="join1" s={10} /></CapBtn>
          <CapBtn><Ico n="join2" s={10} /></CapBtn>
          <CapBtn><Ico n="join3" s={10} /></CapBtn>
          <Gap $w={4} />
          <CtrlText $w={24}>比率 :</CtrlText>
          <FieldBox $w={27}>10</FieldBox>
        </PRow>
        <PRow>
          <PLabel>線の位置 :</PLabel>
          <CapBtn $on><Ico n="pos1" s={10} /></CapBtn>
          <CapBtn $dim><Ico n="pos2" s={10} /></CapBtn>
          <CapBtn $dim><Ico n="pos3" s={10} /></CapBtn>
        </PRow>
        <PSep />
        <PRow $h={17}>
          <CheckBox />破線
          <Gap $w={75} />
          <Hollow />
          <Hollow />
        </PRow>
        <DashGrid>
          {[0, 1, 2, 3, 4, 5].map((i) => <DashBox key={i} />)}
          {["線分", "間隔", "線分", "間隔", "線分", "間隔"].map((t, i) => <DashLabel key={i}>{t}</DashLabel>)}
        </DashGrid>
        <PSep />
        <PRow $h={17}>
          <PLabel>矢印 :</PLabel>
          <LinePick $w={27}><LineMark $h={2} /></LinePick>
          <Chevron $w={11}><Ico n="chev" s={8} /></Chevron>
          <Gap $w={5} />
          <LinePick $w={27}><LineMark $h={2} /></LinePick>
          <Chevron $w={11}><Ico n="chev" s={8} /></Chevron>
          <Gap $w={5} />
          <Chevron $dim><Ico n="swapsm" s={10} /></Chevron>
        </PRow>
        <PRow $h={20}>
          <PLabel $dim>倍率 :</PLabel>
          <Chevron $dim><Ico n="spin" s={10} /></Chevron>
          <FieldBox $w={27} $dim>100%</FieldBox>
          <Gap $w={5} />
          <Chevron $dim><Ico n="spin" s={10} /></Chevron>
          <FieldBox $w={27} $dim>100%</FieldBox>
          <Gap $w={6} />
          <Chevron $dim><Ico n="unlink" s={10} /></Chevron>
        </PRow>
        <PRow $h={16}>
          <PLabel $dim>先端位置 :</PLabel>
          <CapBtn $dim><Ico n="tipa" s={9} /></CapBtn>
          <CapBtn $dim><Ico n="tipb" s={9} /></CapBtn>
        </PRow>
        <PSep />
        <PRow $h={18}>
          <CtrlText $w={53}>プロファイル :</CtrlText>
          <LinePick $w={54}><LineMark />均等</LinePick>
          <Chevron $w={12}><Ico n="chev" s={8} /></Chevron>
          <Gap $w={5} />
          <Chevron $w={13} $dim><Ico n="flipH" s={9} /></Chevron>
          <Gap $w={3} />
          <Chevron $w={13} $dim><Ico n="flipV" s={9} /></Chevron>
        </PRow>
      </StrokePanel>
    </Frame>
  );
}
